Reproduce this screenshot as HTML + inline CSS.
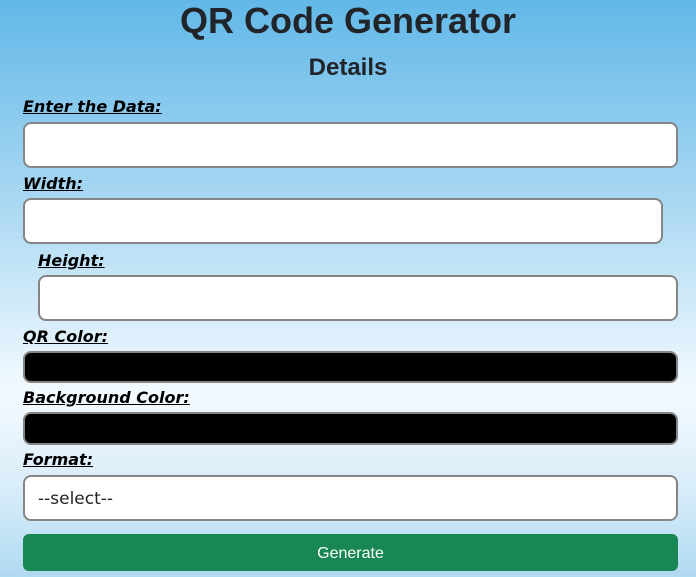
<!DOCTYPE html>
<html><head><style>
html,body{margin:0;padding:0;width:696px;height:577px;overflow:hidden}
body{background:linear-gradient(180deg,#62b8e8 0%,#a9d8f2 35%,#f4faff 68%,#d8ecf9 85%,#b0daf2 100%);font-family:"DejaVu Sans","Liberation Sans",sans-serif;position:relative}
.a{position:absolute}
h1{position:absolute;left:0;width:696px;top:0;margin:0;text-align:center;font-family:"Liberation Sans",sans-serif;font-size:36px;font-weight:bold;color:#212529;line-height:42px}
h2{position:absolute;left:0;width:696px;top:52px;margin:0;text-align:center;font-family:"Liberation Sans",sans-serif;font-size:24px;font-weight:bold;color:#212529;line-height:32px}
.l{position:absolute;font-weight:bold;font-style:italic;text-decoration:underline;font-size:16px;color:#000;line-height:20px}
.i{position:absolute;box-sizing:border-box;border:2px solid #858585;border-radius:8px;background:#fff}
.k{background:#000}
</style></head><body>
<h1>QR Code Generator</h1>
<h2>Details</h2>
<div class="l" style="left:23px;top:97px">Enter the Data:</div>
<div class="i" style="left:23px;top:122px;width:655px;height:46px"></div>
<div class="l" style="left:23px;top:174px">Width:</div>
<div class="i" style="left:23px;top:198px;width:640px;height:46px"></div>
<div class="l" style="left:38px;top:251px">Height:</div>
<div class="i" style="left:38px;top:275px;width:640px;height:46px"></div>
<div class="l" style="left:23px;top:327px">QR Color:</div>
<div class="i k" style="left:23px;top:351px;width:655px;height:32px"></div>
<div class="l" style="left:23px;top:388px">Background Color:</div>
<div class="i k" style="left:23px;top:412px;width:655px;height:33px"></div>
<div class="l" style="left:23px;top:450px">Format:</div>
<div class="i" style="left:23px;top:475px;width:655px;height:46px"><span class="a" style="left:13px;top:12px;font-size:17px;color:#212529">--select--</span></div>
<div class="a" style="left:23px;top:534px;width:655px;height:37px;background:#198754;border-radius:6px;color:#fff;font-family:'Liberation Sans',sans-serif;font-size:16px;text-align:center;line-height:39px">Generate</div>
</body></html>
